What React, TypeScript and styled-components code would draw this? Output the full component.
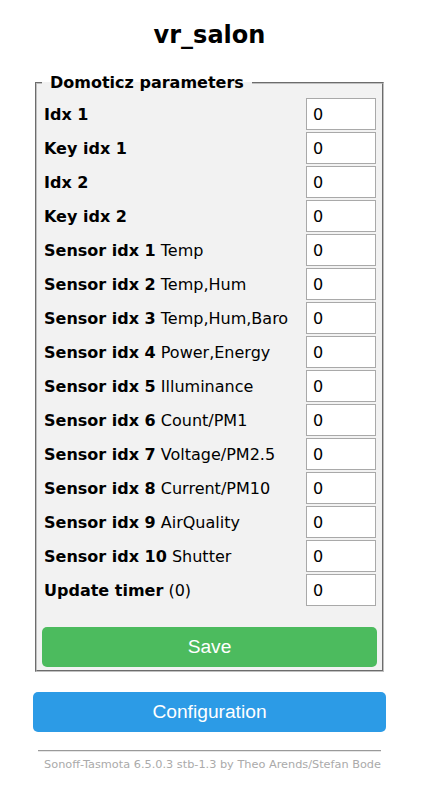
import React from "react";
import styled, { createGlobalStyle } from "styled-components";

const GlobalStyle = createGlobalStyle`
  html, body { margin: 0; padding: 0; background: #fff; }
  body { font-family: "DejaVu Sans", Verdana, sans-serif; color: #000; }
`;

const Page = styled.div`
  width: 419px;
  display: flex;
  flex-direction: column;
  align-items: center;
  padding-top: 21px;
`;

const Container = styled.div`
  width: 353px;
  display: flex;
  flex-direction: column;
`;

const Title = styled.h2`
  margin: 0;
  font-size: 24px;
  line-height: 28px;
  font-weight: bold;
  text-align: center;
`;

const Fieldset = styled.fieldset`
  margin: 24px 2px 0 2px;
  padding: 4px 5px 3px 5px;
  background: #f2f2f2;
  border: 2px groove #c0c0c0;
  min-width: 0;
`;

const Legend = styled.legend`
  font-size: 16px;
  font-weight: bold;
  padding: 0 8px;
  margin-left: 0;
`;

const Rows = styled.div`
  display: flex;
  flex-direction: column;
  gap: 2px;
  padding: 2px 1px 2px 2px;
`;

const Row = styled.div`
  display: grid;
  grid-template-columns: 1fr 70px;
  column-gap: 2px;
  align-items: center;
  height: 32px;
`;

const Label = styled.div`
  font-size: 16px;
  white-space: nowrap;
`;

const Strong = styled.b`
  font-weight: bold;
`;

const Input = styled.input`
  box-sizing: border-box;
  width: 70px;
  height: 32px;
  border: 1px solid #a9a9a9;
  padding: 0 6px;
  font-family: "DejaVu Sans", Verdana, sans-serif;
  font-size: 16px;
  color: #000;
  background: #fff;
  outline: none;
`;

const Button = styled.button<{ $tone: "green" | "blue" }>`
  display: block;
  width: 100%;
  height: 40px;
  border: 0;
  border-radius: 5px;
  background: ${(p) => (p.$tone === "green" ? "#4cbb5e" : "#2c9be6")};
  color: #fff;
  font-family: "Liberation Sans", Arial, sans-serif;
  font-size: 19.2px;
  line-height: 40px;
  padding: 0;
  cursor: pointer;
`;

const SaveWrap = styled.div`
  margin-top: 19px;
`;

const ConfigWrap = styled.div`
  margin-top: 20px;
`;

const Footer = styled.div`
  margin-top: 18px;
  padding: 0 5px;
  text-align: right;
`;

const Rule = styled.hr`
  margin: 0;
  height: 0;
  border: 0;
  border-top: 1px solid #9a9a9a;
  border-bottom: 1px solid #e6e6e6;
`;

const FooterText = styled.div`
  margin-top: 6px;
  font-size: 11.3px;
  color: #aaa;
`;

const rows: [string, string][] = [
  ["Idx 1", ""],
  ["Key idx 1", ""],
  ["Idx 2", ""],
  ["Key idx 2", ""],
  ["Sensor idx 1", "Temp"],
  ["Sensor idx 2", "Temp,Hum"],
  ["Sensor idx 3", "Temp,Hum,Baro"],
  ["Sensor idx 4", "Power,Energy"],
  ["Sensor idx 5", "Illuminance"],
  ["Sensor idx 6", "Count/PM1"],
  ["Sensor idx 7", "Voltage/PM2.5"],
  ["Sensor idx 8", "Current/PM10"],
  ["Sensor idx 9", "AirQuality"],
  ["Sensor idx 10", "Shutter"],
  ["Update timer", "(0)"],
];

export default function App() {
  return (
    <>
      <GlobalStyle />
      <Page>
        <Container>
          <Title>vr_salon</Title>
          <Fieldset>
            <Legend>Domoticz parameters</Legend>
            <Rows>
              {rows.map(([b, n]) => (
                <Row key={b}>
                  <Label>
                    <Strong>{b}</Strong>
                    {n ? " " + n : ""}
                  </Label>
                  <Input defaultValue="0" />
                </Row>
              ))}
            </Rows>
            <SaveWrap>
              <Button $tone="green">Save</Button>
            </SaveWrap>
          </Fieldset>
          <ConfigWrap>
            <Button $tone="blue">Configuration</Button>
          </ConfigWrap>
          <Footer>
            <Rule />
            <FooterText>Sonoff-Tasmota 6.5.0.3 stb-1.3 by Theo Arends/Stefan Bode</FooterText>
          </Footer>
        </Container>
      </Page>
    </>
  );
}
